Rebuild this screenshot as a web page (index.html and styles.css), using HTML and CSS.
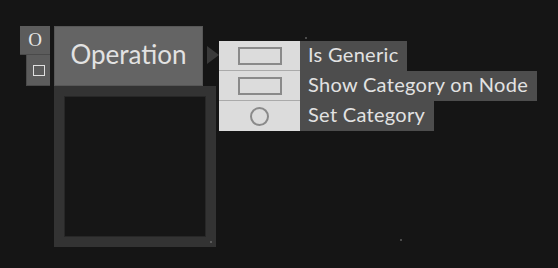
FILE: index.html
```html
<!DOCTYPE html>
<html lang="en">
<head>
  <meta charset="UTF-8" />
  <title>Operation Node</title>
  <link rel="stylesheet" href="styles.css">
</head>
<body>
  <div class="canvas">
    <div class="node">
      <div class="pins">
        <div class="pin pin-top">O</div>
        <div class="pin pin-bottom"><span class="pin-square"></span></div>
      </div>
      <div class="node-body">
        <div class="node-title">Operation</div>
        <div class="node-frame">
          <div class="frame-inner"></div>
          <span class="grip"></span>
        </div>
      </div>
    </div>

    <div class="menu">
      <div class="menu-arrow"></div>
      <div class="menu-list">
        <div class="menu-row">
          <div class="menu-icon"><span class="box"></span></div>
          <div class="menu-label">Is Generic</div>
        </div>
        <div class="menu-row">
          <div class="menu-icon"><span class="box"></span></div>
          <div class="menu-label">Show Category on Node</div>
        </div>
        <div class="menu-row last">
          <div class="menu-icon"><span class="ring"></span></div>
          <div class="menu-label">Set Category</div>
        </div>
      </div>
    </div>

    <span class="dot dot-a"></span>
    <span class="dot dot-b"></span>
  </div>
</body>
</html>
```

FILE: styles.css
```css
html, body {
  margin: 0;
  padding: 0;
  background: #151515;
  height: 100%;
}
body {
  font-family: Lato, "Open Sans", sans-serif;
  color: #e0e0e0;
  overflow: hidden;
}
.canvas {
  position: relative;
  width: 558px;
  height: 268px;
  padding: 26px 0 0 20px;
  box-sizing: border-box;
}
.node {
  display: flex;
  gap: 4px;
  align-items: flex-start;
}
.pins {
  display: flex;
  flex-direction: column;
  align-items: flex-end;
  width: 30px;
}
.pin {
  background: #5c5c5c;
  color: #e6e6e6;
  box-sizing: border-box;
  display: flex;
  align-items: center;
  justify-content: center;
}
.pin-top {
  width: 30px;
  height: 29px;
  font-family: "Liberation Serif", serif;
  font-size: 19px;
  padding-bottom: 1px;
  border-bottom: 1px solid #4a4a4a;
}
.pin-bottom {
  width: 24px;
  height: 31px;
  border-left: 1px solid #4a4a4a;
  border-bottom: 1px solid #4a4a4a;
}
.pin-square {
  width: 12px;
  height: 11px;
  box-sizing: border-box;
  border: 1.5px solid #e0e0e0;
}
.node-body {
  display: flex;
  flex-direction: column;
  align-items: flex-start;
}
.node-title {
  width: 149px;
  height: 60px;
  box-sizing: border-box;
  background: #646464;
  border: 1px solid #575757;
  padding-bottom: 4px;
  display: flex;
  align-items: center;
  justify-content: center;
  font-size: 26px;
  color: #e2e2e2;
}
.node-frame {
  position: relative;
  width: 162px;
  height: 161px;
  box-sizing: border-box;
  border: 10px solid #333333;
  background: #161616;
}
.frame-inner {
  height: 100%;
  box-sizing: border-box;
  border: 1px solid #272727;
}
.grip {
  position: absolute;
  right: -6px;
  bottom: -6px;
  width: 2px;
  height: 2px;
  background: #5a5a5a;
}
.menu {
  position: absolute;
  left: 207px;
  top: 41px;
  display: flex;
  align-items: flex-start;
}
.menu-arrow {
  margin-top: 5px;
  width: 0;
  height: 0;
  border-top: 9px solid transparent;
  border-bottom: 9px solid transparent;
  border-left: 12px solid #3a3a3a;
}
.menu-list {
  display: flex;
  flex-direction: column;
  align-items: flex-start;
}
.menu-row {
  display: flex;
  height: 30px;
}
.menu-icon {
  width: 81px;
  background: #dcdcdc;
  border-bottom: 1px solid #aaaaaa;
  box-sizing: border-box;
  display: flex;
  align-items: center;
  justify-content: center;
}
.menu-row.last .menu-icon {
  border-bottom: none;
}
.box {
  width: 44px;
  height: 18px;
  box-sizing: border-box;
  border: 2px solid #8a8a8a;
}
.ring {
  width: 19px;
  height: 19px;
  box-sizing: border-box;
  border: 2px solid #8a8a8a;
  border-radius: 50%;
}
.menu-label {
  background: #4d4d4d;
  padding: 0 9px 3px 8px;
  font-size: 20px;
  line-height: 27px;
  letter-spacing: 0.3px;
  color: #e2e2e2;
  white-space: nowrap;
}
.dot {
  position: absolute;
  width: 2px;
  height: 2px;
  background: #4a4a4a;
}
.dot-a {
  left: 400px;
  top: 239px;
}
.dot-b {
  left: 305px;
  top: 37px;
}
```
